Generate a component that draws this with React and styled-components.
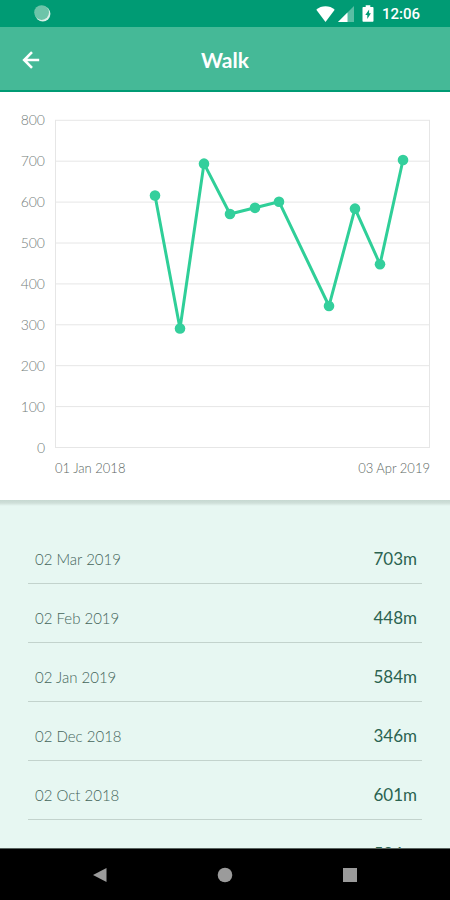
import React from 'react';
import styled, { createGlobalStyle } from 'styled-components';

const colors = {
  statusBar: '#009b74',
  header: '#45b997',
  line: '#2fcf98',
  dot: '#34cf9c',
  grid: '#e6e6e6',
  axis: '#747e7b',
  mint: '#e7f7f2',
  rule: '#c3d3cd',
  date: '#44655a',
  value: '#2b6350',
  nav: '#9b9b9b',
};

const GlobalStyle = createGlobalStyle`
  *, *::before, *::after {
    box-sizing: border-box;
  }
  body {
    margin: 0;
    background: #fff;
    font-family: Lato, 'Open Sans', sans-serif;
  }
`;

const Screen = styled.div`
  display: flex;
  flex-direction: column;
  height: 100vh;
  overflow: hidden;
`;

const StatusBar = styled.div`
  display: flex;
  flex: none;
  align-items: center;
  justify-content: space-between;
  height: 27px;
  padding: 0 30px 0 34px;
  background: ${colors.statusBar};
`;

const StatusIcons = styled.div`
  display: flex;
  align-items: center;
`;

const Signal = styled.svg`
  margin: 0 8px 0 3px;
`;

const Clock = styled.time`
  margin-left: 8px;
  color: #fff;
  font: 500 15px/20px Roboto, sans-serif;
`;

const Header = styled.header`
  display: grid;
  flex: none;
  grid-template-columns: 40px 1fr 40px;
  align-items: center;
  height: 65px;
  padding: 2px 11px 0;
  background: ${colors.header};
  border-bottom: 2px solid ${colors.statusBar};
`;

const Title = styled.h1`
  margin: 0;
  color: #fff;
  font-size: 21px;
  font-weight: 700;
  line-height: 28px;
  text-align: center;
`;

const IconButton = styled.button`
  display: flex;
  align-items: center;
  justify-content: center;
  height: 40px;
  padding: 0;
  border: 0;
  background: none;
  cursor: pointer;
`;

const ChartSection = styled.section`
  display: grid;
  flex: none;
  grid-template-columns: 45px 1fr;
  column-gap: 10px;
  padding: 20px 20px 24px 0;
`;

const YAxis = styled.div`
  display: flex;
  flex-direction: column;
  justify-content: space-between;
  color: ${colors.axis};
  font-size: 14px;
  font-weight: 300;
  line-height: 16px;
  text-align: right;
`;

const Plot = styled.svg`
  display: block;
  width: 100%;
  height: auto;
  margin: 8px 0;
  overflow: visible;
`;

const XAxis = styled.div`
  display: flex;
  grid-column: 2;
  justify-content: space-between;
  margin-top: 4px;
  color: #5c6764;
  font-size: 13px;
  font-weight: 300;
  line-height: 16px;
`;

const Entries = styled.ul`
  flex: 1;
  min-height: 0;
  margin: 0;
  padding: 25px 28px 0;
  overflow: hidden;
  list-style: none;
  background: linear-gradient(#c6d8d1, #cfdfd9 3px, ${colors.mint} 6px);
`;

const Entry = styled.li`
  display: flex;
  justify-content: space-between;
  padding: 24px 5px 14px 7px;
  border-bottom: 1px solid ${colors.rule};
  line-height: 20px;
`;

const EntryDate = styled.span`
  color: ${colors.date};
  font-size: 15px;
  font-weight: 300;
`;

const EntryValue = styled.span`
  color: ${colors.value};
  font-size: 17px;
`;

const NavBar = styled.nav`
  display: grid;
  flex: none;
  grid-template-columns: repeat(3, 1fr);
  align-items: center;
  height: 52px;
  padding: 0 38px;
  background: #000;
  border-top: 1px solid #59635f;
`;

const ticks = [800, 700, 600, 500, 400, 300, 200, 100, 0];

// x is the distance from the start of the period, 375 being its end
const points = [
  { x: 100, value: 616 },
  { x: 125, value: 291 },
  { x: 149, value: 694 },
  { x: 175, value: 571 },
  { x: 200, value: 586 },
  { x: 224, value: 601 },
  { x: 274, value: 346 },
  { x: 300, value: 584 },
  { x: 325, value: 448 },
  { x: 348, value: 703 },
];

const entries = [
  { date: '02 Mar 2019', value: '703m' },
  { date: '02 Feb 2019', value: '448m' },
  { date: '02 Jan 2019', value: '584m' },
  { date: '02 Dec 2018', value: '346m' },
  { date: '02 Oct 2018', value: '601m' },
  { date: '02 Sep 2018', value: '586m' },
];

const toY = value => 327.5 - value * 0.409;

const Chart = () => (
  <ChartSection>
    <YAxis>
      {ticks.map(tick => (
        <span key={tick}>{tick}</span>
      ))}
    </YAxis>
    <Plot viewBox="0 0 375 328" role="img" aria-label="Walk">
      <g stroke={colors.grid} strokeWidth="1">
        {ticks.map(tick => (
          <line key={tick} x1="0" x2="375" y1={toY(tick)} y2={toY(tick)} />
        ))}
        <line x1="0.5" x2="0.5" y1="0" y2="328" />
        <line x1="374.5" x2="374.5" y1="0" y2="328" />
      </g>
      <polyline
        points={points.map(({ x, value }) => `${x},${toY(value)}`).join(' ')}
        fill="none"
        stroke={colors.line}
        strokeWidth="3"
        strokeLinejoin="round"
      />
      {points.map(({ x, value }) => (
        <circle key={x} cx={x} cy={toY(value)} r="5.3" fill={colors.dot} />
      ))}
    </Plot>
    <XAxis>
      <span>01 Jan 2018</span>
      <span>03 Apr 2019</span>
    </XAxis>
  </ChartSection>
);

const App = () => (
  <Screen>
    <GlobalStyle />
    <StatusBar>
      <svg width="17" height="17" viewBox="0 0 17 17">
        <circle cx="8.8" cy="8.8" r="7.6" fill="#d9f0e8" />
        <circle cx="7.6" cy="7.6" r="7.4" fill="#6cc4a9" />
      </svg>
      <StatusIcons>
        <svg width="19" height="16" viewBox="0 0 20 16" preserveAspectRatio="none">
          <path d="M0.3 3.7C5.5-0.9 14.5-0.9 19.7 3.7L10 16z" fill="#fff" />
        </svg>
        <Signal width="16" height="16" viewBox="0 0 16 16">
          <path d="M16 0v16H0z" fill="#fff" opacity="0.35" />
          <path d="M9.5 6.5V16H0z" fill="#fff" />
        </Signal>
        <svg width="12" height="17" viewBox="5.5 0 12 17">
          <path d="M7 2h2.2V.3h4.6V2H16c.6 0 1 .4 1 1v12.8c0 .6-.4 1-1 1H7c-.6 0-1-.4-1-1V3c0-.6.4-1 1-1z" fill="#fff" />
          <path d="M12.6 4.5L8.8 10h2v4l3.6-5.7h-1.8z" fill={colors.statusBar} />
        </svg>
        <Clock>12:06</Clock>
      </StatusIcons>
    </StatusBar>
    <Header>
      <IconButton type="button" aria-label="Back">
        <svg width="18" height="18" viewBox="0 0 18 18" fill="none" stroke="#fff" strokeWidth="2.6">
          <path d="M17.2 9H2.5M10 1.2L2.2 9L10 16.8" />
        </svg>
      </IconButton>
      <Title>Walk</Title>
    </Header>
    <Chart />
    <Entries>
      {entries.map(({ date, value }) => (
        <Entry key={date}>
          <EntryDate>{date}</EntryDate>
          <EntryValue>{value}</EntryValue>
        </Entry>
      ))}
    </Entries>
    <NavBar>
      <IconButton type="button" aria-label="Back">
        <svg width="14" height="14" viewBox="0 0 14 14">
          <path d="M13.5 0v14L0 7z" fill={colors.nav} />
        </svg>
      </IconButton>
      <IconButton type="button" aria-label="Home">
        <svg width="16" height="16" viewBox="0 0 16 16">
          <circle cx="8" cy="8" r="7.3" fill={colors.nav} />
        </svg>
      </IconButton>
      <IconButton type="button" aria-label="Recent apps">
        <svg width="14" height="14" viewBox="0 0 14 14">
          <path d="M0 0h14v14H0z" fill={colors.nav} />
        </svg>
      </IconButton>
    </NavBar>
  </Screen>
);

export default App;
